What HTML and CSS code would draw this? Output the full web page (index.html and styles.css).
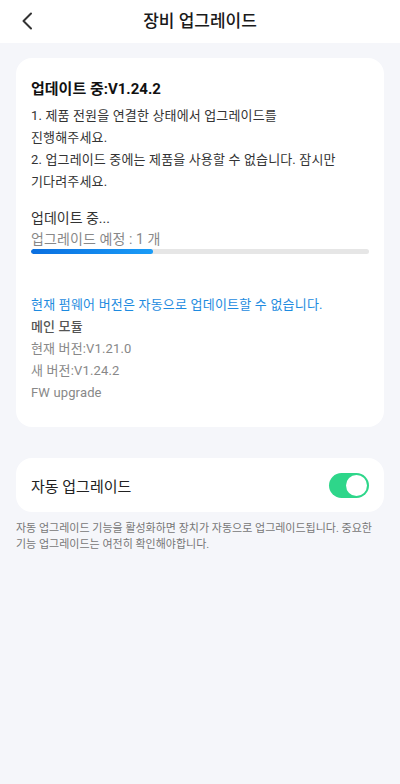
FILE: index.html
```html
<!DOCTYPE html>
<html lang="ko">
<head>
<meta charset="utf-8">
<link rel="stylesheet" href="styles.css">
</head>
<body>
<header class="header">
  <span class="back"><svg width="12" height="18" viewBox="0 0 12 18"><path d="M10 1.5 L2.5 9 L10 16.5" fill="none" stroke="#333" stroke-width="2" stroke-linecap="round" stroke-linejoin="round"/></svg></span>
  <h1 class="title">장비 업그레이드</h1>
</header>
<main class="main">
  <section class="card info">
    <h2 class="heading">업데이트 중:V1.24.2</h2>
    <p class="desc">1. 제품 전원을 연결한 상태에서 업그레이드를<br>진행해주세요.<br>2. 업그레이드 중에는 제품을 사용할 수 없습니다. 잠시만<br>기다려주세요.</p>
    <div class="progress-block">
      <div class="status">업데이트 중...</div>
      <div class="pending">업그레이드 예정 : 1 개</div>
      <div class="bar"><div class="fill" style="width:36%"></div></div>
    </div>
    <div class="module">
      <div class="notice">현재 펌웨어 버전은 자동으로 업데이트할 수 없습니다.</div>
      <div class="mod-name">메인 모듈</div>
      <div class="gray">현재 버전:V1.21.0</div>
      <div class="gray">새 버전:V1.24.2</div>
      <div class="gray">FW upgrade</div>
    </div>
  </section>
  <section class="card toggle-row">
    <span class="toggle-label">자동 업그레이드</span>
    <span class="switch"><span class="knob"></span></span>
  </section>
  <p class="footnote">자동 업그레이드 기능을 활성화하면 장치가 자동으로 업그레이드됩니다. 중요한 기능 업그레이드는 여전히 확인해야합니다.</p>
</main>
</body>
</html>
```
FILE: styles.css
```css
* { box-sizing: border-box; }
html, body { margin: 0; padding: 0; }
body {
  width: 400px;
  min-height: 784px;
  background: #f5f6fa;
  font-family: "Roboto", "Noto Sans CJK KR", sans-serif;
  color: #222;
}
.header {
  height: 43px;
  background: #fff;
  display: flex;
  align-items: center;
  justify-content: center;
  position: relative;
}
.back {
  position: absolute;
  left: 21px;
  top: 12px;
  display: flex;
}
.title {
  margin: 0;
  font-size: 17px;
  font-weight: 500;
  color: #1a1a1a;
  line-height: 1;
}
.main {
  padding: 15px 16px 0;
}
.card {
  background: #fff;
  border-radius: 16px;
}
.info {
  padding: 17px 15px 23px;
  display: flex;
  flex-direction: column;
}
.heading {
  margin: 0;
  font-size: 15px;
  font-weight: 700;
  line-height: 28px;
  color: #111;
}
.desc {
  margin: 2px 0 0;
  font-size: 13px;
  line-height: 22px;
  letter-spacing: 0.15px;
  color: #333;
}
.progress-block {
  margin-top: 14px;
}
.status {
  font-size: 14px;
  line-height: 22px;
  color: #333;
}
.pending {
  font-size: 14px;
  line-height: 20px;
  letter-spacing: 0.1px;
  color: #888;
}
.bar {
  height: 5px;
  border-radius: 3px;
  background: #e6e6e6;
  overflow: hidden;
}
.fill {
  height: 100%;
  border-radius: 3px;
  background: linear-gradient(90deg, #0a6fe0, #1a9cf7);
}
.module {
  margin-top: 40px;
  font-size: 13px;
  line-height: 22px;
  letter-spacing: 0.15px;
}
.notice { color: #1d8be0; letter-spacing: 0.2px; }
.mod-name { color: #555; font-weight: 500; }
.gray { color: #888; }
.toggle-row {
  margin-top: 31px;
  height: 54px;
  padding: 0 15px;
  display: flex;
  align-items: center;
  justify-content: space-between;
}
.toggle-label {
  font-size: 15px;
  color: #222;
}
.switch {
  width: 40px;
  height: 25px;
  border-radius: 13px;
  background: #2ed68a;
  display: flex;
  align-items: center;
  justify-content: flex-end;
  padding-right: 2px;
}
.knob {
  width: 21px;
  height: 21px;
  border-radius: 50%;
  background: #fff;
}
.footnote {
  margin: 9px 0 0;
  font-size: 11px;
  line-height: 16px;
  color: #777;
}
```
